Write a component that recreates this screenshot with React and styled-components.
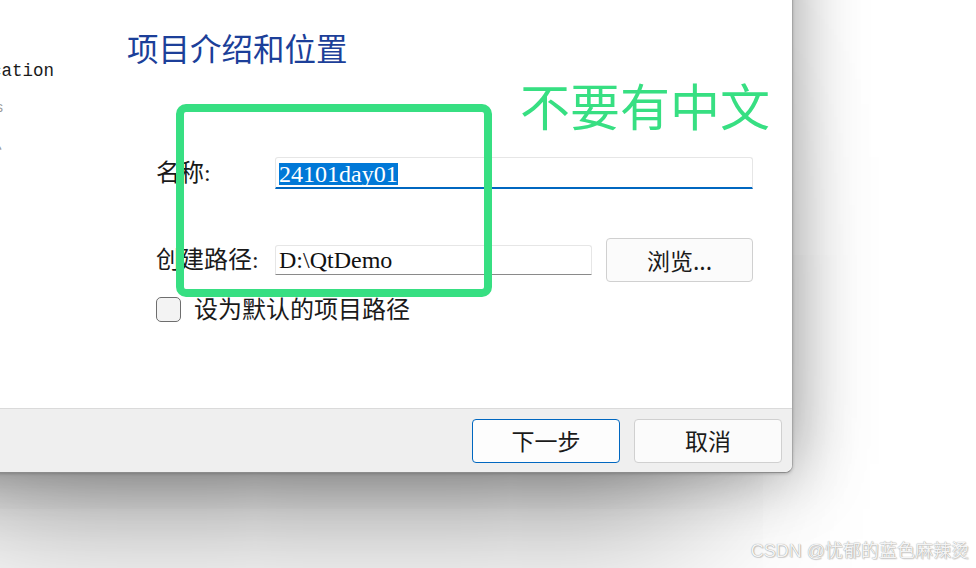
import React from "react";
import styled, { createGlobalStyle } from "styled-components";

const GlobalStyle = createGlobalStyle`
  html, body {
    margin: 0;
    padding: 0;
    background: #ffffff;
  }
  body {
    width: 976px;
    height: 568px;
    overflow: hidden;
    font-family: "Liberation Serif", "Noto Sans CJK SC", serif;
  }
`;

const Stage = styled.div`
  position: relative;
  width: 976px;
  height: 568px;
  overflow: hidden;
  background: #ffffff;
`;

/* the dialog runs past the top and left edge of the crop */
const Dialog = styled.div`
  width: 942px;
  height: 592px;
  margin: -120px 0 0 -150px;
  display: flex;
  flex-direction: column;
  background: #ffffff;
  border-right: 1px solid #a6a6a6;
  border-bottom: 1px solid #8c8c8c;
  border-bottom-right-radius: 8px;
  box-shadow: 0 1px 3px rgba(0, 0, 0, 0.18), 0 0 70px rgba(0, 0, 0, 0.4),
    0 134px 160px -90px rgba(0, 0, 0, 0.4);
`;

const Body = styled.div`
  flex: 1;
  display: grid;
  grid-template-columns: 277px 1fr;
  padding-top: 120px;
  min-height: 0;
`;

const Sidebar = styled.ul`
  list-style: none;
  margin: 0;
  padding: 53px 0 0 120px;
`;

const SideItem = styled.li`
  height: 37px;
  line-height: 37px;
  white-space: nowrap;
  font-family: "Liberation Mono", "Noto Sans CJK SC", monospace;
  font-size: ${(p) => p.$size || 17.5}px;
  color: ${(p) => (p.$muted ? "#9a9a9a" : "#1a1a1a")};
`;

const Main = styled.div`
  display: flex;
  flex-direction: column;
`;

const Title = styled.h1`
  margin: 27px 0 0;
  height: 40px;
  line-height: 40px;
  font-family: "Noto Sans CJK SC", sans-serif;
  font-weight: 400;
  font-size: 31.5px;
  color: #1c3f99;
`;

const Form = styled.div`
  display: flex;
  flex-direction: column;
  margin-top: 90px;
  padding-left: 29px;
`;

const Row = styled.div`
  display: grid;
  grid-template-columns: 105px 317px 147px;
  column-gap: 14px;
  align-items: center;
  margin-top: ${(p) => p.$top || 0}px;
`;

const Label = styled.span`
  font-size: 24px;
  line-height: 1;
  color: #1a1a1a;
  white-space: nowrap;
`;

const Field = styled.div`
  box-sizing: border-box;
  height: ${(p) => (p.$active ? 32 : 30)}px;
  grid-column: ${(p) => (p.$wide ? "2 / span 2" : "auto")};
  display: flex;
  align-items: center;
  padding-left: 3px;
  background: #ffffff;
  border: 1px solid #e6e6e6;
  border-bottom: ${(p) =>
    p.$active ? "2px solid #0067c0" : "1px solid #8a8a8a"};
  border-radius: 3px 3px 0 0;
  font-size: 24px;
  line-height: 1;
  color: #111111;
`;

const Selected = styled.span`
  background: #0078d7;
  color: #ffffff;
  line-height: 22px;
  height: 22px;
  margin-top: 2px;
`;

const Button = styled.button`
  box-sizing: border-box;
  width: ${(p) => p.$w || 148}px;
  height: 44px;
  padding: 0;
  border: 1px solid ${(p) => (p.$primary ? "#0067c0" : "#d0d0d0")};
  border-radius: 4px;
  background: ${(p) => (p.$primary ? "#fdfdfd" : "#fbfbfb")};
  font-family: "Noto Sans CJK SC", "Liberation Serif", sans-serif;
  font-size: 23px;
  color: #1a1a1a;
  line-height: 1;
`;

const CheckRow = styled.label`
  display: flex;
  align-items: center;
  gap: 13px;
  height: 25px;
  margin-top: 15px;
  font-size: 24px;
  line-height: 1;
  color: #1a1a1a;
`;

const CheckBox = styled.span`
  box-sizing: border-box;
  width: 25px;
  height: 25px;
  border: 1.5px solid #6e6e6e;
  border-radius: 5px;
  background: #f3f3f3;
`;

const Footer = styled.div`
  height: 63px;
  display: flex;
  justify-content: flex-end;
  align-items: center;
  gap: 14px;
  padding-right: 10px;
  background: #efefef;
  border-top: 1px solid #dadada;
  border-bottom-right-radius: 8px;
`;

const Highlight = styled.div`
  position: absolute;
  left: 176px;
  top: 104px;
  width: 316px;
  height: 193px;
  box-sizing: border-box;
  border: 8px solid #37df82;
  border-radius: 10px;
`;

const Note = styled.div`
  position: absolute;
  left: 520px;
  top: 79px;
  line-height: 50px;
  font-family: "Noto Sans CJK SC", sans-serif;
  font-size: 50px;
  color: #37df82;
  white-space: nowrap;
`;

const Watermark = styled.div`
  position: absolute;
  right: 7px;
  top: 536px;
  font-family: "Liberation Sans", "Noto Sans CJK SC", sans-serif;
  font-size: 18px;
  color: #f4f4f4;
  text-shadow: 0 0 1px rgba(0, 0, 0, 0.45), 1px 1px 1px rgba(0, 0, 0, 0.15);
  white-space: nowrap;
`;

export default function App() {
  return (
    <Stage>
      <GlobalStyle />
      <Dialog>
        <Body>
          <Sidebar>
            <SideItem>Location</SideItem>
            <SideItem $muted $size={14}>Kits</SideItem>
            <SideItem $muted $size={16}>汇总</SideItem>
          </Sidebar>
          <Main>
            <Title>项目介绍和位置</Title>
            <Form>
              <Row>
                <Label>名称:</Label>
                <Field $active $wide>
                  <Selected>24101day01</Selected>
                </Field>
              </Row>
              <Row $top={49}>
                <Label>创建路径:</Label>
                <Field>D:\QtDemo</Field>
                <Button $w={147}>浏览...</Button>
              </Row>
              <CheckRow>
                <CheckBox />
                设为默认的项目路径
              </CheckRow>
            </Form>
          </Main>
        </Body>
        <Footer>
          <Button $primary>下一步</Button>
          <Button>取消</Button>
        </Footer>
      </Dialog>
      <Highlight />
      <Note>不要有中文</Note>
      <Watermark>CSDN @忧郁的蓝色麻辣烫</Watermark>
    </Stage>
  );
}
